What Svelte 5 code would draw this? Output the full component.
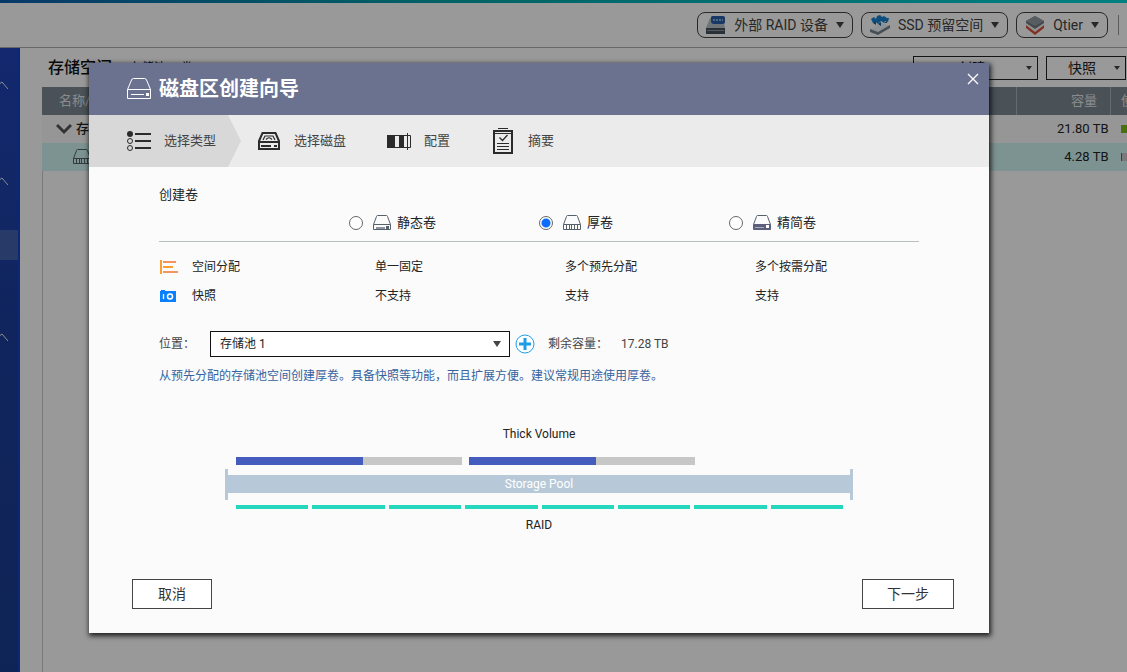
<script>
    let volumeType = $state('thick');
    let pool = $state('1');

    const types = [
        { id: 'static', label: '静态卷', space: '单一固定', snapshot: '不支持' },
        { id: 'thick', label: '厚卷', space: '多个预先分配', snapshot: '支持' },
        { id: 'thin', label: '精简卷', space: '多个按需分配', snapshot: '支持' }
    ];

    const steps = [
        { id: 'type', label: '选择类型' },
        { id: 'disk', label: '选择磁盘' },
        { id: 'config', label: '配置' },
        { id: 'summary', label: '摘要' }
    ];

    const tools = [
        { id: 'raid', label: '外部 RAID 设备' },
        { id: 'ssd', label: 'SSD 预留空间' },
        { id: 'qtier', label: 'Qtier' }
    ];

    const volumes = [56, 56];               // Used part of each volume, in percent
    const disks = [1, 2, 3, 4, 5, 6, 7, 8];
</script>

{#snippet volumeIcon(kind)}
    <svg viewBox="0 0 18 16" width="18" height="16" fill="none" stroke="#56616b">
        <path d="M.5 9.500 3.500 1.500Q3.700.500 4.500.500H13.500Q14.300.500 14.500 1.500L17.500 9.500" />
        {#if kind === 'thin'}
            <path fill="#5b5f7b" stroke="#5b5f7b" d="M.5 9.500H17.500V14.500H.5Z" />
            <path fill="#fff" stroke="none" d="M13 10h3v3h-3z" />
            <path stroke="#a9acbf" d="M2 12.500H11" />
        {:else}
            <path d="M.5 9.500H17.500V14.500H.5Z" />
            {#if kind === 'thick'}
                <path d="M3.500 10V14M6.500 10V14M8.500 10V14M11.500 10V14M14.500 10V14" />
            {:else}
                <path stroke="#8d969e" stroke-width="2" d="M3 13H12" />
                <path fill="#56616b" stroke="none" d="M13 11h3v3h-3z" />
            {/if}
        {/if}
    </svg>
{/snippet}

{#snippet stepIcon(id)}
    {#if id === 'type'}
        <svg viewBox="0 0 24 22" width="24" height="22" fill="none" stroke="#2b2b2b">
            <circle cx="3" cy="4" r="3" fill="#2b2b2b" stroke="none" />
            <circle cx="3" cy="11" r="2.500" />
            <circle cx="3" cy="18" r="2.500" />
            <path stroke-width="2" d="M8 4H24M8 11H24M8 18H24" />
        </svg>
    {:else if id === 'disk'}
        <svg viewBox="0 0 24 20" width="24" height="20" fill="none" stroke="#2b2b2b" stroke-width="2">
            <path d="M2 10 5.500 2H18.500L22 10V18H2Z" />
            <path d="M2 11H22" />
            <path stroke-width="1.200" d="M6 9 8 5H16L18 9M9 8.500Q12 5 15 8.500" />
            <path d="M4 15H14M17 15H20" />
        </svg>
    {:else if id === 'config'}
        <svg viewBox="0 0 24 18" width="24" height="18" fill="none" stroke="#2b2b2b">
            <path fill="#2b2b2b" stroke="none" d="M0 3h8v13H0zM12 3h5v13h-5z" />
            <path d="M8 3.500H12M8 15.500H12M17 3.500H23.500V15.500H17M20.500 1V18" />
        </svg>
    {:else}
        <svg viewBox="0 0 24 26" width="24" height="26" fill="none" stroke="#2b2b2b">
            <path stroke-width="2" d="M3 3H21V25H3Z" />
            <path d="M7 .5H17M3 5.500H21" />
            <path stroke-width="1.300" d="M8.500 9.500 11.500 12.500 16.500 7" />
            <path d="M6 15.500H18M6 18.500H18M6 21.500H18" />
        </svg>
    {/if}
{/snippet}

{#snippet toolIcon(id)}
    <svg viewBox="0 0 20 20" width="20" height="20">
        {#if id === 'raid'}
            <path fill="#b8c3ca" d="M0 13 4 3H17L19 13Z" />
            <path fill="#285ea9" d="M6 1H17Q19 1 19 3V7Q19 9 17 9H8Q5 9 5 6V2Z" />
            <path stroke="#86b1df" stroke-width="2" stroke-dasharray="2 1" d="M7 5H17" />
            <path fill="#45525c" d="M0 13H19V19H0Z" />
            <path stroke="#8d989f" d="M1 15.500H18" />
        {:else if id === 'ssd'}
            <path fill="#eef3f7" d="M0 14 12 8 20 11 8 18Z" />
            <path fill="#77838c" d="M0 14 8 17 20 10V13L8 20 0 17Z" />
            <path fill="#1682d2" d="M1 4 4 2 6 4 7 1 10 0 12 2 14 1 17 3 19 3 18 7 15 6 14 8 11 6 8 9 6 7 3 8Z" />
            <path fill="#1261a3" d="M3 8 6 6V10ZM8 9 11 7V11ZM14 8 17 6V8Z" />
        {:else}
            <path fill="#d85137" d="M1 10 10 16 19 10V13L10 20 1 13Z" />
            <path fill="#edf1f3" d="M1 8 10 14 19 8V10L10 17 1 10Z" />
            <path fill="#707980" d="M10 1 19 6V8L10 14 1 8V6Z" />
            <path fill="#919ba1" d="M10 1 19 6 10 11 1 6Z" />
        {/if}
    </svg>
{/snippet}

<div class="page">
    <header class="topbar">
        {#each tools as tool}
            <button class="pill">
                {@render toolIcon(tool.id)}
                <span>{tool.label}</span>
                <i class="caret"></i>
            </button>
        {/each}
        <span class="divider"></span>
    </header>

    <div class="workspace">
        <nav class="sidebar" aria-label="菜单">
            {#each ['first', 'second', 'third'] as section}
                <div class="section {section}">
                    <svg viewBox="0 0 8 10" width="8" height="10" fill="none" stroke="#e4edf4">
                        <path d="M0 2.500 2 1 8 8" />
                    </svg>
                </div>
                {#if section === 'second'}
                    <div class="current"></div>
                {/if}
            {/each}
        </nav>

        <main>
            <div class="titlebar">
                <h1>存储空间</h1>
                <span class="counts">1 存储池, 1 卷</span>
                <button class="drop create">创建<i class="caret small"></i></button>
                <button class="drop">快照<i class="caret small"></i></button>
            </div>
            <table class="storage">
                <thead>
                    <tr><th>名称/别名</th><th class="size">容量</th><th class="usage">使用率</th></tr>
                </thead>
                <tbody>
                    <tr>
                        <td>
                            <div class="name">
                                <svg viewBox="0 0 16 12" width="16" height="12" fill="none" stroke="#555" stroke-width="3">
                                    <path d="M1 2 8 9 15 2" />
                                </svg>
                                存储池 1
                            </div>
                        </td>
                        <td class="size">21.80 TB</td>
                        <td class="usage"><span class="meter"></span></td>
                    </tr>
                    <tr class="selected">
                        <td><div class="name child">{@render volumeIcon('thick')}</div></td>
                        <td class="size">4.28 TB</td>
                        <td class="usage"><span class="meter empty"></span></td>
                    </tr>
                </tbody>
            </table>
        </main>
    </div>

    <div class="overlay">
        <div class="dialog" role="dialog" aria-labelledby="wizard-title">
            <div class="dialog-head">
                <svg viewBox="0 0 24 22" width="24" height="22" fill="none" stroke="#fff">
                    <path d="M.5 11.500 4.500 2Q5 .5 6.500.5H17.500Q19 .5 19.500 2L23.500 11.500V20.500H.5ZM.5 11.500H23.500" />
                    <path d="M4 16.500H17" />
                    <path fill="#fff" stroke="none" d="M19 15h3v3h-3z" />
                </svg>
                <h2 id="wizard-title">磁盘区创建向导</h2>
                <button class="close" aria-label="关闭">
                    <svg viewBox="0 0 12 12" width="12" height="12" stroke="#fff" stroke-width="1.300">
                        <path d="M1 1 11 11M11 1 1 11" />
                    </svg>
                </button>
            </div>

            <ol class="steps">
                {#each steps as step, i}
                    <li class:active={i === 0}>
                        {@render stepIcon(step.id)}
                        <span>{step.label}</span>
                    </li>
                {/each}
            </ol>

            <div class="content">
                <h3>创建卷</h3>
                <table class="compare">
                    <thead>
                        <tr>
                            <td></td>
                            {#each types as type}
                                <th>
                                    <label>
                                        <input type="radio" name="volume" value={type.id} bind:group={volumeType} />
                                        {@render volumeIcon(type.id)}
                                        <span>{type.label}</span>
                                    </label>
                                </th>
                            {/each}
                        </tr>
                    </thead>
                    <tbody>
                        <tr>
                            <th>
                                <div class="feature">
                                    <svg viewBox="0 0 20 16" width="20" height="16" fill="none" stroke="#f5945c" stroke-width="2">
                                        <path stroke="#ff9d2e" d="M2 1V15" />
                                        <path d="M4 3H17M4 13H19" />
                                        <path stroke="#ff9d2e" d="M4 8H14" />
                                    </svg>
                                    空间分配
                                </div>
                            </th>
                            {#each types as type}<td>{type.space}</td>{/each}
                        </tr>
                        <tr>
                            <th>
                                <div class="feature">
                                    <svg viewBox="0 0 20 16" width="20" height="16" fill="none" stroke="#fff">
                                        <path fill="#0b80ff" stroke="none" d="M1 3H2V2H6V3H17V14H1Z" />
                                        <path stroke-width="1.300" d="M4.500 6V11" />
                                        <circle cx="11" cy="8.500" r="2.500" stroke-width="1.500" />
                                    </svg>
                                    快照
                                </div>
                            </th>
                            {#each types as type}<td>{type.snapshot}</td>{/each}
                        </tr>
                    </tbody>
                </table>

                <div class="location">
                    <label for="pool">位置：</label>
                    <div class="select">
                        <select id="pool" bind:value={pool}>
                            <option value="1">存储池 1</option>
                        </select>
                        <i class="caret"></i>
                    </div>
                    <button class="add" aria-label="新建存储池">
                        <svg viewBox="0 0 20 20" width="20" height="20" fill="none" stroke="#1e9de6">
                            <circle cx="10" cy="10" r="9" fill="#fff" />
                            <path stroke-width="3" d="M10 4V16M4 10H16" />
                        </svg>
                    </button>
                    <span class="free">剩余容量：</span>
                    <span>17.28 TB</span>
                </div>
                <p class="hint">从预先分配的存储池空间创建厚卷。具备快照等功能，而且扩展方便。建议常规用途使用厚卷。</p>

                <div class="diagram">
                    <div class="caption">Thick Volume</div>
                    <div class="volumes">
                        {#each volumes as used}
                            <div class="volume"><div style="width: {used}%"></div></div>
                        {/each}
                    </div>
                    <div class="pool"><div>Storage Pool</div></div>
                    <div class="disks">
                        {#each disks as disk (disk)}<span></span>{/each}
                    </div>
                    <div class="caption">RAID</div>
                </div>
            </div>

            <div class="actions">
                <button>取消</button>
                <button class="next">下一步</button>
            </div>
        </div>
    </div>
</div>

<style>
    :global(body) {
        margin: 0;
        font-family: Roboto, "Noto Sans CJK SC", sans-serif;
        font-size: 12px;
        line-height: 20px;
        color: #222;
    }

    button,
    select {
        font: inherit;
        color: inherit;
        box-sizing: border-box;
        border-radius: 0;
    }

    svg {
        display: block;
        flex: none;
    }

    table {
        width: 100%;
        border-collapse: collapse;
        table-layout: fixed;
    }

    th,
    td {
        padding: 0;
        text-align: left;
        font-weight: normal;
    }

    .page {
        position: relative;
        display: flex;
        flex-direction: column;
        min-height: 100vh;
        background: #fff;
        overflow: hidden;
    }

    .page::before {
        content: '';
        height: 3px;
        background: linear-gradient(90deg, #0d5fae, #00a5a8 40%, #00d5d8);
    }

    .topbar {
        display: flex;
        justify-content: flex-end;
        align-items: center;
        gap: 8px;
        height: 44px;
        padding-right: 8px;
        border-bottom: 1px solid #b0b0b0;
    }

    .pill {
        display: flex;
        align-items: center;
        gap: 8px;
        height: 26px;
        padding: 0 8px;
        border: 1px solid #444;
        border-radius: 8px;
        background: #fff;
        color: #444;
        font-size: 14px;
    }

    .divider {
        width: 1px;
        height: 20px;
        margin-left: 2px;
        background: #999;
    }

    .caret {
        border: 4px solid transparent;
        border-top: 6px solid #444;
        border-bottom: 0;
    }

    .caret.small {
        border-width: 4px 3px 0;
    }

    .workspace {
        display: flex;
        flex: 1;
    }

    .sidebar {
        width: 18px;
        border-right: 2px solid #1441c4;
        background: linear-gradient(#2044b8, #1c3f9c 45%, #1a3c90);
    }

    .section {
        display: flex;
        align-items: center;
        height: 48px;
    }

    .first {
        margin: 14px 0 48px;
    }

    .current {
        height: 30px;
        margin: 24px 0 54px;
        background: #4463ad;
    }

    main {
        display: flex;
        flex-direction: column;
        flex: 1;
        min-width: 0;
        padding-left: 22px;
    }

    .titlebar {
        display: flex;
        align-items: center;
        gap: 8px;
        height: 39px;
        padding: 0 1px 0 6px;
    }

    h1 {
        margin: 0;
        font-size: 16px;
        font-weight: 500;
        color: #111;
    }

    .counts {
        margin-right: auto;
    }

    .drop {
        display: flex;
        align-items: center;
        justify-content: flex-end;
        gap: 18px;
        width: 80px;
        height: 24px;
        padding: 0 5px;
        border: 1px solid #222;
        background: #fff;
        font-size: 14px;
    }

    .drop.create {
        width: 125px;
        gap: 40px;
        line-height: 16px;
    }

    .storage {
        font-size: 13px;
    }

    main::after {
        content: '';
        flex: 1;
        border-left: 1px solid #ccc;
    }

    .storage th,
    .storage td {
        height: 28px;
    }

    .storage th {
        padding-left: 17px;
        background: #7c8792;
        color: #e4e7ea;
    }

    .storage .size {
        width: 93px;
        padding: 0 2px 0 0;
        text-align: right;
    }

    .storage th.size {
        width: 80px;
        padding-right: 13px;
        border-left: 1px solid #aab2ba;
        border-right: 1px solid #aab2ba;
    }

    .storage .usage {
        width: 6px;
        padding-left: 10px;
        overflow: hidden;
        white-space: nowrap;
    }

    .storage tbody tr {
        background: #fafafa;
    }

    .storage tbody .selected {
        background: #d0f5f3;
    }

    .name {
        display: flex;
        align-items: center;
        gap: 4px;
        padding-left: 14px;
        font-weight: 500;
    }

    .name.child {
        padding-left: 31px;
    }

    .meter {
        display: block;
        height: 8px;
        background: #78bf1f;
    }

    .meter.empty {
        border-left: 1px solid #666;
        background: #ccc;
    }

    /* The wizard lies over the dimmed page */
    .overlay {
        position: absolute;
        inset: 0;
        padding: 63px 138px 39px 89px;
        background: rgba(0, 0, 0, 0.4);
    }

    .dialog {
        background: #fbfbfb;
        box-shadow: 1px 2px 5px 1px rgba(0, 0, 0, 0.8);
    }

    .dialog-head {
        display: flex;
        align-items: center;
        gap: 8px;
        height: 52px;
        padding: 0 9px 0 38px;
        background: #6b728f;
        color: #fff;
    }

    h2 {
        flex: 1;
        margin: 0;
        font-size: 20px;
        line-height: 28px;
    }

    .close {
        align-self: flex-start;
        margin-top: 9px;
        padding: 1px;
        border: 0;
        background: none;
    }

    .steps {
        display: flex;
        height: 52px;
        margin: 0;
        padding: 0;
        list-style: none;
        background: #ebebeb;
        color: #444;
        font-size: 13px;
    }

    .steps li {
        display: flex;
        align-items: center;
        gap: 13px;
        padding: 0 25px 0 16px;
    }

    .steps .active {
        padding-left: 38px;
        background: #d8d8d8;
        clip-path: polygon(0 0, calc(100% - 13px) 0, 100% 50%, calc(100% - 13px) 100%, 0 100%);
    }

    .content {
        padding: 18px 70px 0;
    }

    h3 {
        margin: 0;
        font-size: 13px;
        font-weight: normal;
    }

    .compare thead td,
    .compare thead th {
        height: 36px;
        border-bottom: 1px solid #b9bec1;
        font-size: 13px;
    }

    .compare tbody th,
    .compare tbody td {
        height: 29px;
    }

    .compare tbody td {
        padding-left: 26px;
    }

    .compare tbody::before {
        content: '';
        display: block;
        height: 10px;
    }

    .compare label {
        display: flex;
        align-items: center;
    }

    .compare input {
        appearance: none;
        box-sizing: border-box;
        width: 14px;
        height: 14px;
        margin: 0 10px 0 0;
        border: 1px solid #666;
        border-radius: 50%;
        background: #fff;
    }

    .compare input:checked {
        background: radial-gradient(circle, #0b6cff 4px, #fff 5px);
    }

    .compare label span {
        margin-left: 6px;
    }

    .feature {
        display: flex;
        align-items: center;
        gap: 13px;
    }

    .location {
        display: flex;
        align-items: center;
        margin-top: 21px;
        color: #444;
    }

    .location label {
        width: 51px;
    }

    .select {
        position: relative;
        width: 300px;
    }

    .select select {
        appearance: none;
        display: block;
        width: 100%;
        height: 26px;
        padding: 0 24px 0 9px;
        border: 1px solid #111;
        background: #fff;
        color: #222;
    }

    .select .caret {
        position: absolute;
        top: 10px;
        right: 9px;
    }

    .add {
        margin: 0 13px 0 5px;
        padding: 0;
        border: 0;
        background: none;
    }

    .free {
        width: 73px;
    }

    .hint {
        margin: 9px 0 0;
        color: #36639f;
    }

    .diagram {
        margin: 38px 66px 0;
    }

    .caption {
        text-align: center;
    }

    .volumes {
        display: flex;
        gap: 7px;
        margin: 13px 11px 4px;
    }

    .volume {
        flex: 0 0 37.3%;
        height: 8px;
        background: #c7c7c7;
    }

    .volume div {
        height: 100%;
        background: #435cbd;
    }

    .pool {
        padding: 6px 0 7px;
        border: solid #b7c9d8;
        border-width: 0 3px;
        color: #fff;
        text-align: center;
        line-height: 18px;
    }

    .pool div {
        background: #b7c9d8;
    }

    .disks {
        display: grid;
        grid-template-columns: repeat(8, 1fr);
        gap: 4px;
        margin: 5px 10px 6px 11px;
    }

    .disks span {
        height: 4px;
        background: #25d7bd;
    }

    .actions {
        display: flex;
        justify-content: space-between;
        padding: 44px 35px 24px 43px;
    }

    .actions button {
        width: 80px;
        height: 30px;
        border: 1px solid #444;
        background: #fff;
        color: #333;
        font-size: 14px;
    }

    .actions .next {
        width: 92px;
    }
</style>
